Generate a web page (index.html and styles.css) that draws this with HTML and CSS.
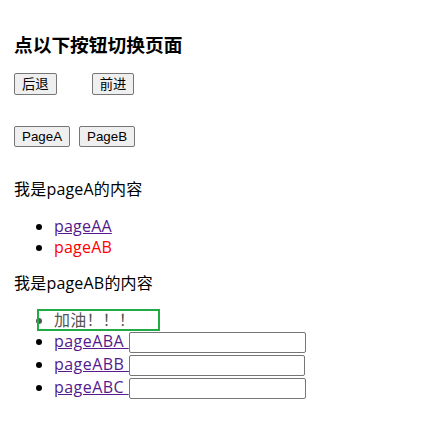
FILE: index.html
```html
<!DOCTYPE html>
<html lang="zh-CN">
<head>
<meta charset="utf-8">
<title>切换页面</title>
<link rel="stylesheet" href="styles.css">
</head>
<body>
<div class="app">
  <h3 class="title">点以下按钮切换页面</h3>
  <div class="nav-row nav-history">
    <button class="btn">后退</button>
    <button class="btn">前进</button>
  </div>
  <div class="nav-row nav-pages">
    <button class="btn">PageA</button>
    <button class="btn">PageB</button>
  </div>
  <p class="page-text">我是pageA的内容</p>
  <ul class="list">
    <li><a class="link" href="#aa">pageAA</a></li>
    <li><a class="link active" href="#ab">pageAB</a></li>
  </ul>
  <p class="page-text">我是pageAB的内容</p>
  <ul class="list list-sub">
    <li class="cheer">加油！！！</li>
    <li class="row"><a class="link" href="#aba">pageABA </a><input class="field field-a" type="text"></li>
    <li class="row"><a class="link" href="#abb">pageABB </a><input class="field field-b" type="text"></li>
    <li class="row"><a class="link" href="#abc">pageABC </a><input class="field field-c" type="text"></li>
  </ul>
</div>
</body>
</html>
```

FILE: styles.css
```css
html, body {
  margin: 0;
  padding: 0;
  background: #ffffff;
}

body {
  font-family: "Open Sans", "Noto Sans CJK SC", sans-serif;
  font-size: 16px;
  line-height: 21px;
  letter-spacing: 0.2px;
  color: #000000;
}

.app {
  padding: 32px 14px 0 14px;
}

.title {
  margin: 0;
  font-family: "Noto Sans CJK SC", sans-serif;
  font-size: 18.72px;
  font-weight: bold;
  line-height: 24px;
  letter-spacing: 0;
}

.nav-row {
  display: flex;
  align-items: flex-start;
}

.nav-history {
  margin-top: 17px;
  gap: 35px;
}

.nav-pages {
  margin-top: 31px;
  gap: 9px;
}

.btn {
  font-family: "Noto Sans CJK SC", "Liberation Sans", sans-serif;
  font-size: 13.33px;
  line-height: 16px;
  letter-spacing: 0;
  height: 22px;
  padding: 1px 7px;
  margin: 0;
  background: #efefef;
  color: #000000;
  border: 1px solid #767676;
  border-radius: 2px;
}

.nav-pages .btn {
  font-family: "Liberation Sans", "Noto Sans CJK SC", sans-serif;
  height: 21px;
  padding: 1px 7px;
}

.page-text {
  margin: 32px 0 0 0;
}

.list {
  margin: 16px 0 0 0;
  padding-left: 40px;
}

.list + .page-text {
  margin-top: 15px;
}

.link {
  color: #551a8b;
  text-decoration: underline;
}

.link.active {
  color: #ff0000;
  text-decoration: none;
}

.list-sub {
  margin-top: 15px;
}

.list-sub .link {
  letter-spacing: 0.45px;
}

.cheer {
  position: relative;
  color: #555555;
  height: 22px;
  line-height: 22px;
}

.cheer::before {
  content: "";
  position: absolute;
  left: -17px;
  top: 0;
  width: 119px;
  height: 18px;
  border: 2px solid #22aa44;
}

.row {
  height: 23px;
}

.field {
  box-sizing: border-box;
  height: 21px;
  width: 177px;
  padding: 1px 2px;
  margin: 1px 0 0 0;
  border: 1px solid #767676;
  border-radius: 2px;
  font-size: 13px;
  vertical-align: top;
  background: #ffffff;
}

.field-b {
  width: 176px;
}
```
